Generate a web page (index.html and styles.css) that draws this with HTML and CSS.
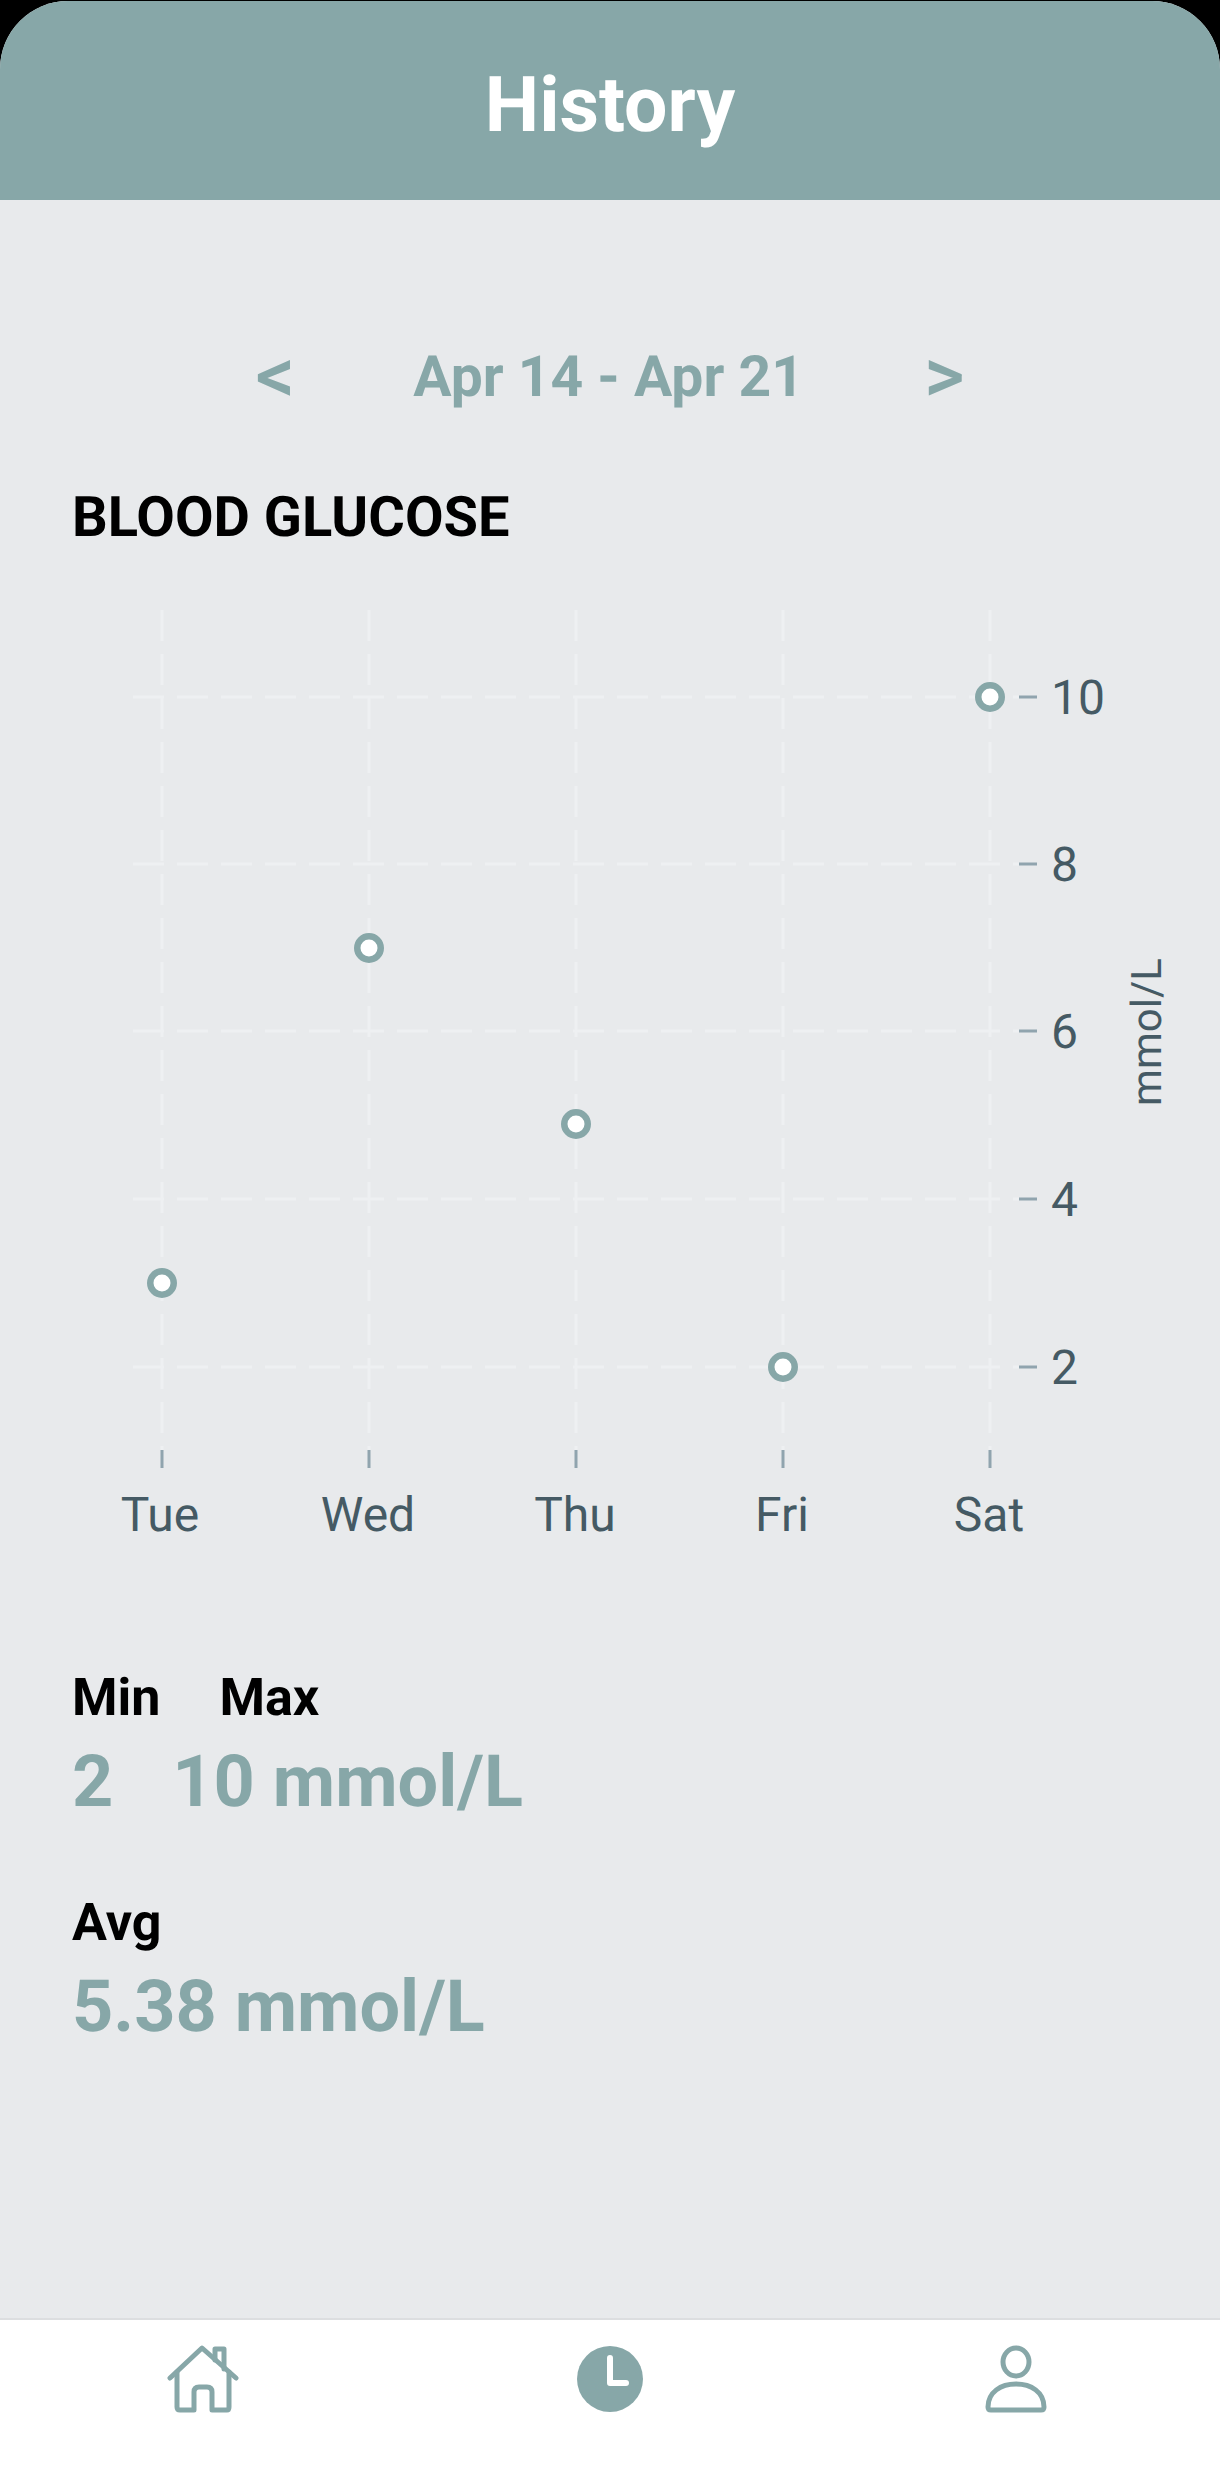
FILE: index.html
```html
<!DOCTYPE html>
<html lang="en">
<head>
  <meta charset="UTF-8" />
  <meta name="viewport" content="width=device-width, initial-scale=1" />
  <title>History</title>
  <link rel="stylesheet" href="styles.css">
</head>
<body>

  <div class="app">
    <header class="top-bar">
      <h1 class="top-title">History</h1>
    </header>

    <main class="content">
      <div class="date-nav">
        <span class="date-arrow">&lt;</span>
        <span class="date-range">Apr 14 - Apr 21</span>
        <span class="date-arrow">&gt;</span>
      </div>

      <h2 class="section-title">BLOOD GLUCOSE</h2>

      <svg class="chart" width="1220" height="1000" viewBox="0 0 1220 1000">
        <!-- grid, y offset is 560 from the page top -->
        <g class="grid">
          <line x1="162" y1="50" x2="162" y2="890" />
          <line x1="369" y1="50" x2="369" y2="890" />
          <line x1="576" y1="50" x2="576" y2="890" />
          <line x1="783" y1="50" x2="783" y2="890" />
          <line x1="990" y1="50" x2="990" y2="890" />
          <line x1="133" y1="137" x2="1019" y2="137" />
          <line x1="133" y1="304" x2="1019" y2="304" />
          <line x1="133" y1="471" x2="1019" y2="471" />
          <line x1="133" y1="639" x2="1019" y2="639" />
          <line x1="133" y1="807" x2="1019" y2="807" />
        </g>
        <g class="ticks">
          <line x1="162" y1="890" x2="162" y2="908" />
          <line x1="369" y1="890" x2="369" y2="908" />
          <line x1="576" y1="890" x2="576" y2="908" />
          <line x1="783" y1="890" x2="783" y2="908" />
          <line x1="990" y1="890" x2="990" y2="908" />
          <line x1="1019" y1="137" x2="1037" y2="137" />
          <line x1="1019" y1="304" x2="1037" y2="304" />
          <line x1="1019" y1="471" x2="1037" y2="471" />
          <line x1="1019" y1="639" x2="1037" y2="639" />
          <line x1="1019" y1="807" x2="1037" y2="807" />
        </g>
        <g class="axis-text">
          <text x="1051" y="154">10</text>
          <text x="1051" y="321">8</text>
          <text x="1051" y="488">6</text>
          <text x="1051" y="656">4</text>
          <text x="1051" y="824">2</text>
          <text class="mid" x="160" y="971">Tue</text>
          <text class="mid" x="368" y="971">Wed</text>
          <text class="mid" x="575" y="971">Thu</text>
          <text class="mid" x="782" y="971">Fri</text>
          <text class="mid" x="989" y="971">Sat</text>
          <text class="unit" transform="translate(1161 472) rotate(-90)">mmol/L</text>
        </g>
        <g class="points">
          <circle cx="162" cy="723" r="11.75" />
          <circle cx="369" cy="388" r="11.75" />
          <circle cx="576" cy="564" r="11.75" />
          <circle cx="783" cy="807" r="11.75" />
          <circle cx="990" cy="137" r="11.75" />
        </g>
      </svg>

      <div class="stat-row stat-labels first-label">
        <span>Min</span>
        <span>Max</span>
      </div>
      <div class="stat-row stat-values">
        <span>2</span>
        <span>10 mmol/L</span>
      </div>

      <div class="stat-labels avg-label">Avg</div>
      <div class="stat-values">5.38 mmol/L</div>
    </main>

    <nav class="bottom-nav">
      <div class="nav-item">
        <svg width="72" height="68" viewBox="0 0 72 68" fill="none" stroke="#87a7a8" stroke-width="5" stroke-linecap="round" stroke-linejoin="round">
          <path d="M3 33L35 3L69 33" />
          <path d="M48 15V4H57V24" />
          <path d="M10 27V62Q10 65 13 65H27V47Q27 42 32 42H40Q45 42 45 47V65H60Q62 65 62 62V27" />
        </svg>
      </div>
      <div class="nav-item">
        <svg width="68" height="68" viewBox="0 0 68 68">
          <circle cx="34" cy="34" r="33" fill="#87a7a8" />
          <path d="M34 13V38H50" fill="none" stroke="#fff" stroke-width="6" stroke-linecap="round" stroke-linejoin="round" />
        </svg>
      </div>
      <div class="nav-item">
        <svg width="64" height="68" viewBox="0 0 64 68" fill="none" stroke="#87a7a8" stroke-width="5" stroke-linejoin="round">
          <ellipse cx="31" cy="17" rx="13" ry="14" />
          <path d="M3 62C3 47 16 39 31 39C46 39 59 47 59 62Q59 65 56 65H6Q3 65 3 62Z" />
        </svg>
      </div>
    </nav>
  </div>

</body>
</html>
```

FILE: styles.css
```css
html, body {
  margin: 0;
  padding: 0;
  background: #000;
}

body {
  font-family: Roboto, Arial, sans-serif;
  text-rendering: geometricPrecision;
}

.app {
  width: 1220px;
  height: 2465px;
  margin-top: 1px;
  display: flex;
  flex-direction: column;
  background: #e8eaec;
  border-radius: 68px 68px 0 0;
  overflow: hidden;
}

.top-bar {
  height: 199px;
  box-sizing: border-box;
  padding-top: 8px;
  flex-shrink: 0;
  display: flex;
  justify-content: center;
  align-items: center;
  background: #87a7a8;
}

.top-title {
  margin: 0;
  font-size: 77px;
  font-weight: 700;
  color: #fff;
}

.content {
  flex: 1;
  display: flex;
  flex-direction: column;
  align-items: flex-start;
}

.date-nav {
  width: 100%;
  margin-top: 145px;
  display: flex;
  justify-content: center;
  align-items: center;
  gap: 118px;
  font-size: 57px;
  font-weight: 700;
  line-height: 64px;
  color: #87a7a8;
}

.date-arrow {
  font-size: 78px;
  font-weight: 500;
}

.date-range {
  margin-right: 2px;
}

.section-title {
  margin: 76px 0 0 72px;
  font-size: 56px;
  font-weight: 700;
  line-height: 64px;
  color: #000;
}

.chart {
  display: block;
  margin-top: 11px;
}

.grid line {
  stroke: #eef0f2;
  stroke-width: 3;
  stroke-dasharray: 31 13;
}

.ticks line {
  stroke: #90a4ae;
  stroke-width: 3;
}

.axis-text text {
  font-size: 48px;
  fill: #455a64;
}

.axis-text .mid {
  text-anchor: middle;
}

.axis-text .unit {
  font-size: 42px;
  text-anchor: middle;
}

.points circle {
  fill: #fff;
  stroke: #87a7a8;
  stroke-width: 6.5;
}

.stat-row {
  display: flex;
  gap: 59px;
}

.first-label {
  margin-top: 108px;
}

.stat-labels {
  margin-left: 72px;
  font-size: 52px;
  font-weight: 700;
  line-height: 60px;
  color: #000;
}

.stat-values {
  margin-top: 12px;
  margin-left: 72px;
  font-size: 72px;
  font-weight: 700;
  line-height: 84px;
  color: #87a7a8;
}

.avg-label {
  margin-top: 69px;
}

.bottom-nav {
  height: 146px;
  flex-shrink: 0;
  display: flex;
  background: #fff;
  border-top: 2px solid #dcdee0;
}

.nav-item {
  flex: 1;
  display: flex;
  justify-content: center;
  padding-top: 25px;
}
```
